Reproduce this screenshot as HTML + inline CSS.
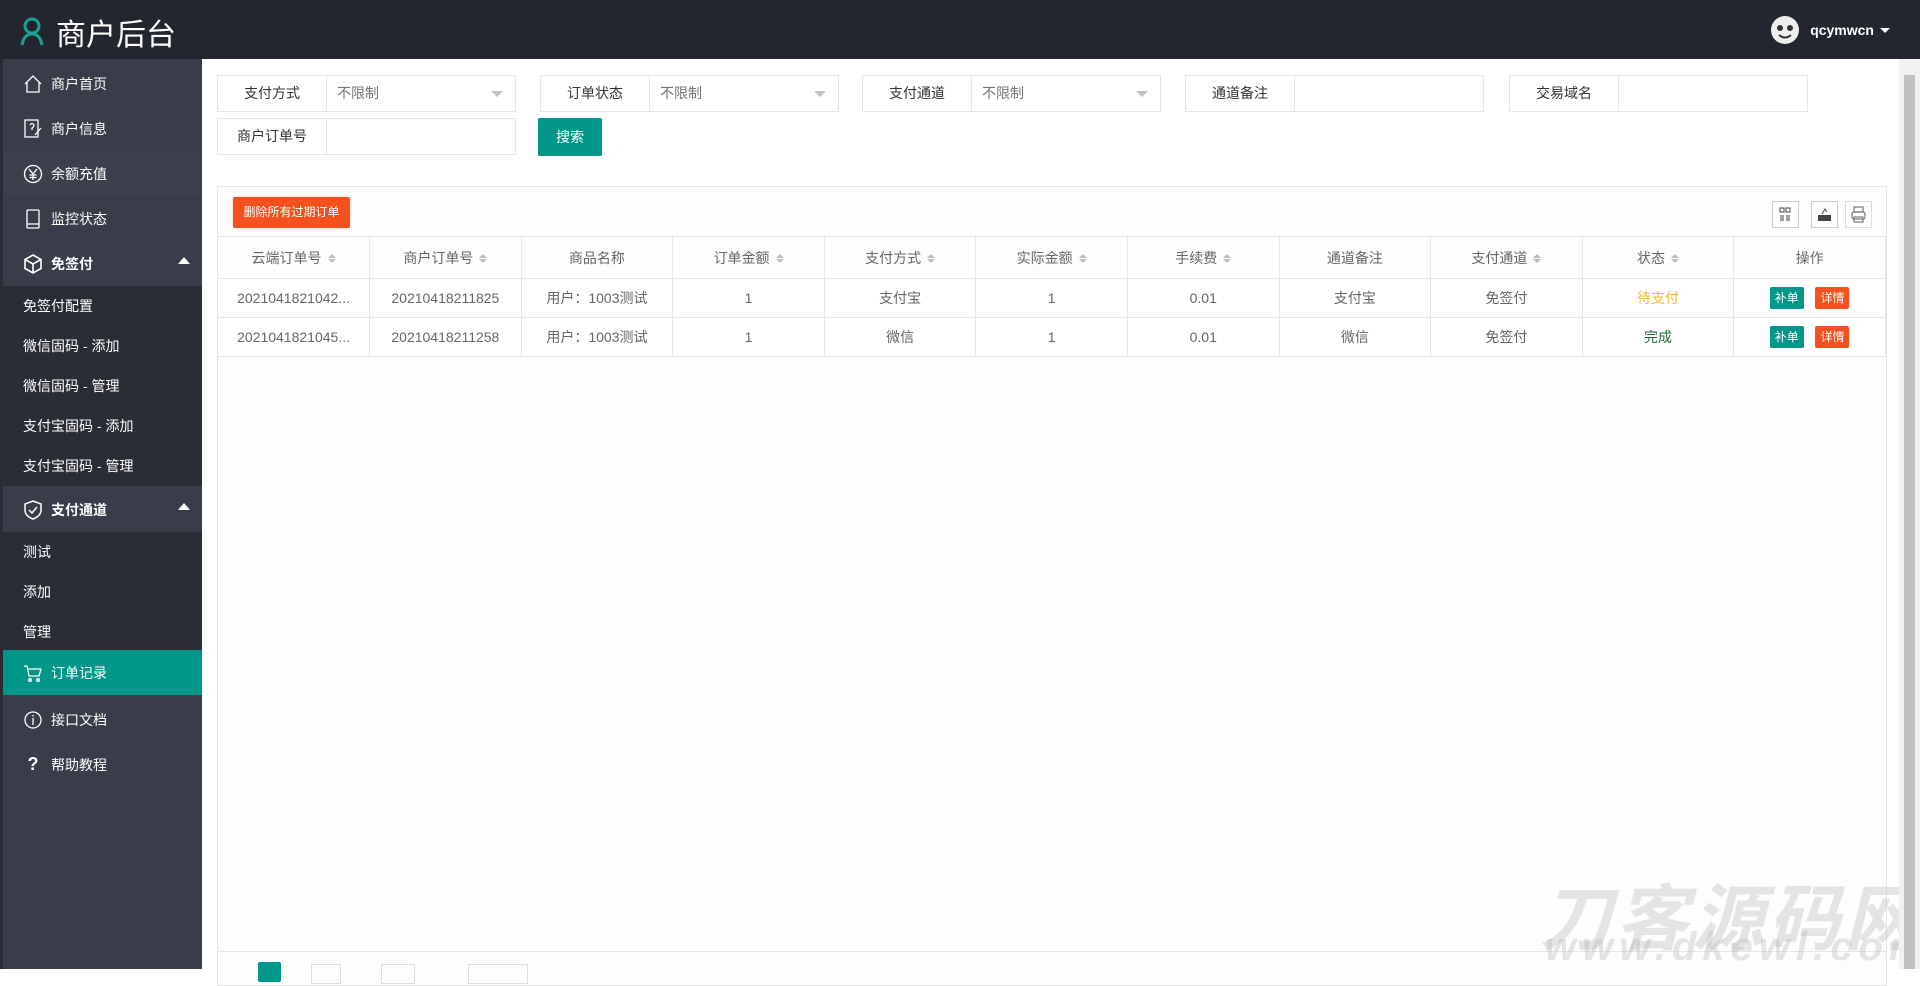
<!DOCTYPE html>
<html><head><meta charset="utf-8"><style>
*{box-sizing:border-box;margin:0;padding:0}
body{width:1920px;height:969px;overflow:hidden;background:#fff;font-family:"Liberation Sans","Noto Sans CJK SC",sans-serif;font-size:14px;color:#333;position:relative}
.hdr{position:absolute;left:0;top:0;width:1920px;height:59px;background:#23262e}
.logo{position:absolute;left:20px;top:10px;color:#fff;font-size:30px;display:flex;align-items:center}
.user{position:absolute;right:30px;top:15px;color:#fff;font-size:14px;font-weight:bold;display:flex;align-items:center}
.side{position:absolute;left:0;top:59px;width:202px;height:910px;background:#393d49;border-left:3px solid #2a2c33}
.mi{position:absolute;left:0;width:199px;height:45px;color:#fff;font-size:14px;display:flex;align-items:center;padding-left:20px}
.mi svg{margin-right:8px}
.sub{position:absolute;left:0;width:199px;background:#2a2d35}
.si{height:40px;line-height:40px;padding-left:20px;color:#fff;font-size:14px}
.main{position:absolute;left:202px;top:59px;width:1697px;height:910px;background:#fff}
.grp{position:absolute;height:37px;border:1px solid #e6e6e6;display:flex;width:299px;background:#fff}
.grp .l{width:109px;text-align:center;line-height:35px;border-right:1px solid #e6e6e6;font-size:14px;color:#333}
.grp .v{flex:1;line-height:35px;padding-left:10px;color:#757575;position:relative}
.grp .v i{position:absolute;right:12px;top:15px;border:6px solid transparent;border-top-color:#c2c2c2}
.btn{position:absolute;background:#009688;color:#fff;text-align:center;border-radius:2px}
.panel{position:absolute;left:217px;top:186px;width:1670px;height:800px;border:1px solid #e6e6e6;background:#fdfdfd}
table{position:absolute;left:0;top:49px;width:1668px;border-collapse:collapse;table-layout:fixed}
td,th{border:1px solid #e6e6e6;text-align:center;font-weight:normal;color:#666;font-size:14px;white-space:nowrap;overflow:hidden}
th{height:42px;background:#fdfdfd}
td{height:39px;background:#fff}
tr>*:first-child{border-left:none}
.srt{display:inline-block;vertical-align:middle;margin-left:6px;width:8px;height:12px;position:relative}
.srt:before,.srt:after{content:"";position:absolute;left:0;border:4px solid transparent}
.srt:before{top:-3px;border-bottom-color:#bbb}
.srt:after{top:6px;border-top-color:#bbb}
.tb{position:absolute;top:14px;width:27px;height:27px;border:1px solid #ccc;background:#fff}
.sb{display:inline-block;color:#fff;font-size:12px;padding:0 5px;height:22px;line-height:22px;border-radius:2px}
.scroll{position:absolute;left:1899px;top:59px;width:21px;height:910px;background:#f1f1f1}
.thumb{position:absolute;left:1904px;top:75px;width:11px;height:894px;background:#c1c1c1}
</style></head><body>
<div class="hdr">
 <div class="logo"><svg width="24" height="30" viewBox="0 0 24 30"><circle cx="12" cy="9" r="7" fill="none" stroke="#1aa094" stroke-width="3"/><path d="M2 28 Q4 17 12 17 Q20 17 22 28" fill="none" stroke="#1aa094" stroke-width="3"/></svg><span style="margin-left:12px">商户后台</span></div>
 <div class="user"><svg width="30" height="30" viewBox="0 0 30 30"><circle cx="15" cy="15" r="14" fill="#eee"/><circle cx="10" cy="13" r="3" fill="#333"/><circle cx="20" cy="13" r="3" fill="#333"/><path d="M9 20 Q15 25 21 20" stroke="#333" stroke-width="2" fill="none"/></svg><span style="margin-left:10px">qcymwcn</span><span style="margin-left:6px;border:5px solid transparent;border-top-color:#fff;margin-top:5px"></span></div>
</div>
<div class="side">
 <div class="mi" style="top:2px"><svg width="20" height="20" viewBox="0 0 20 20" fill="none" stroke="#fff" stroke-width="1.3"><path d="M2 10 L10 2 L18 10 M4 8 V18 H16 V8"/></svg>商户首页</div>
 <div class="mi" style="top:47px"><svg width="20" height="20" viewBox="0 0 20 20" fill="none" stroke="#fff" stroke-width="1.3"><rect x="2" y="1" width="13" height="17"/><path d="M7 6 Q9 3 11 6 Q11 8 9 9 V11"/><path d="M12 16 L18 9"/></svg>商户信息</div>
 <div class="mi" style="top:92px;background:#3c404c"><svg width="20" height="20" viewBox="0 0 20 20" fill="none" stroke="#fff" stroke-width="1.3"><circle cx="10" cy="10" r="8.5"/><path d="M6 5 L10 10 L14 5 M10 10 V16 M6.5 11 H13.5 M6.5 13.5 H13.5"/></svg>余额充值</div>
 <div class="mi" style="top:137px"><svg width="20" height="20" viewBox="0 0 20 20" fill="none" stroke="#fff" stroke-width="1.3"><rect x="4" y="1" width="12" height="18" rx="1"/><path d="M4 15 H16"/></svg>监控状态</div>
 <div class="mi" style="top:182px;font-weight:bold"><svg width="20" height="20" viewBox="0 0 20 20" fill="none" stroke="#fff" stroke-width="1.6"><path d="M10 1 L18 5.5 V14.5 L10 19 L2 14.5 V5.5 Z M2 5.5 L10 10 L18 5.5 M10 10 V19"/></svg>免签付<span style="position:absolute;right:12px;top:16px;border:6px solid transparent;border-bottom-color:#fff;border-top:none;border-bottom-width:7px"></span></div>
 <div class="sub" style="top:227px"><div class="si">免签付配置</div><div class="si">微信固码 - 添加</div><div class="si">微信固码 - 管理</div><div class="si">支付宝固码 - 添加</div><div class="si">支付宝固码 - 管理</div></div>
 <div class="mi" style="top:428px;font-weight:bold"><svg width="20" height="20" viewBox="0 0 20 20" fill="none" stroke="#fff" stroke-width="1.5"><path d="M10 1 L18 4 V10 Q18 16 10 19 Q2 16 2 10 V4 Z M6 10 L9 13 L14 7"/></svg>支付通道<span style="position:absolute;right:12px;top:16px;border:6px solid transparent;border-bottom-color:#fff;border-top:none;border-bottom-width:7px"></span></div>
 <div class="sub" style="top:473px"><div class="si">测试</div><div class="si">添加</div><div class="si">管理</div></div>
 <div class="mi" style="top:591px;background:#009688"><svg width="20" height="20" viewBox="0 0 20 20" fill="none" stroke="#fff" stroke-width="1.3"><path d="M1 3 H4 L6 13 H16 L18 6 H5"/><circle cx="7" cy="17" r="1.3"/><circle cx="15" cy="17" r="1.3"/></svg>订单记录</div>
 <div class="mi" style="top:638px"><svg width="20" height="20" viewBox="0 0 20 20" fill="none" stroke="#fff" stroke-width="1.3"><circle cx="10" cy="10" r="8"/><path d="M10 8 V15 M10 5 V6.5"/></svg>接口文档</div>
 <div class="mi" style="top:683px"><span style="width:20px;margin-right:8px;font-weight:bold;font-size:18px;text-align:center">?</span>帮助教程</div>
</div>
<div class="main"></div>
<div class="grp" style="left:217px;top:75px"><div class="l">支付方式</div><div class="v">不限制<i></i></div></div>
<div class="grp" style="left:540px;top:75px"><div class="l">订单状态</div><div class="v">不限制<i></i></div></div>
<div class="grp" style="left:862px;top:75px"><div class="l">支付通道</div><div class="v">不限制<i></i></div></div>
<div class="grp" style="left:1185px;top:75px"><div class="l">通道备注</div><div class="v"></div></div>
<div class="grp" style="left:1509px;top:75px"><div class="l">交易域名</div><div class="v"></div></div>
<div class="grp" style="left:217px;top:118px"><div class="l">商户订单号</div><div class="v"></div></div>
<div class="btn" style="left:538px;top:118px;width:64px;height:38px;line-height:38px">搜索</div>
<div class="panel">
 <div class="btn" style="left:15px;top:10px;width:117px;height:31px;line-height:31px;background:#f4511e;font-size:12px;box-shadow:0 0 3px #f6c9b5">删除所有过期订单</div>
 <div class="tb" style="left:1554px"><svg width="25" height="25" viewBox="0 0 25 25" fill="none" stroke="#444" stroke-width="1"><rect x="7" y="6" width="4" height="4"/><rect x="13" y="6" width="4" height="4"/><path d="M8 13V19M10 13V19M14 13V19M16 13V19"/></svg></div>
 <div class="tb" style="left:1593px"><svg width="25" height="25" viewBox="0 0 25 25"><path d="M6 13 H19 V19 H6 Z" fill="#444"/><path d="M10 12 L13 7 L15 10" stroke="#444" fill="none"/></svg></div>
 <div class="tb" style="left:1627px;border-color:#ddd"><svg width="25" height="25" viewBox="0 0 25 25" fill="none" stroke="#777" stroke-width="1.2"><rect x="8" y="5" width="9" height="5"/><rect x="6" y="10" width="13" height="7" rx="2"/><rect x="8" y="15" width="9" height="5"/></svg></div>
 <table>
  <tr><th>云端订单号<span class="srt"></span></th><th>商户订单号<span class="srt"></span></th><th>商品名称</th><th>订单金额<span class="srt"></span></th><th>支付方式<span class="srt"></span></th><th>实际金额<span class="srt"></span></th><th>手续费<span class="srt"></span></th><th>通道备注</th><th>支付通道<span class="srt"></span></th><th>状态<span class="srt"></span></th><th>操作</th></tr>
  <tr><td>2021041821042...</td><td>20210418211825</td><td>用户：1003测试</td><td>1</td><td>支付宝</td><td>1</td><td>0.01</td><td>支付宝</td><td>免签付</td><td style="color:#f7b824">待支付</td><td><span class="sb" style="background:#009688">补单</span>&nbsp;&nbsp;&nbsp;<span class="sb" style="background:#f4511e">详情</span></td></tr>
  <tr><td>2021041821045...</td><td>20210418211258</td><td>用户：1003测试</td><td>1</td><td>微信</td><td>1</td><td>0.01</td><td>微信</td><td>免签付</td><td style="color:#1f6b3a">完成</td><td><span class="sb" style="background:#009688">补单</span>&nbsp;&nbsp;&nbsp;<span class="sb" style="background:#f4511e">详情</span></td></tr>
 </table>
 <div style="position:absolute;left:0;top:764px;width:1668px;border-top:1px solid #e6e6e6"></div>
 <div style="position:absolute;left:40px;top:775px;width:23px;height:20px;background:#009688;border-radius:2px"></div>
 <div style="position:absolute;left:93px;top:777px;width:30px;height:20px;border:1px solid #ddd"></div>
 <div style="position:absolute;left:163px;top:777px;width:34px;height:20px;border:1px solid #ddd"></div>
 <div style="position:absolute;left:250px;top:777px;width:60px;height:20px;border:1px solid #ddd"></div>
</div>
<div style="position:absolute;left:1540px;top:860px;font-size:72px;font-weight:bold;font-style:italic;color:rgba(180,180,180,.35);letter-spacing:4px">刀客源码网</div>
<div style="position:absolute;left:1545px;top:925px;font-size:40px;font-weight:bold;font-style:italic;color:rgba(180,180,180,.35);letter-spacing:6px">www.dkewl.com</div>
<div class="scroll"></div><div class="thumb"></div>
</body></html>
